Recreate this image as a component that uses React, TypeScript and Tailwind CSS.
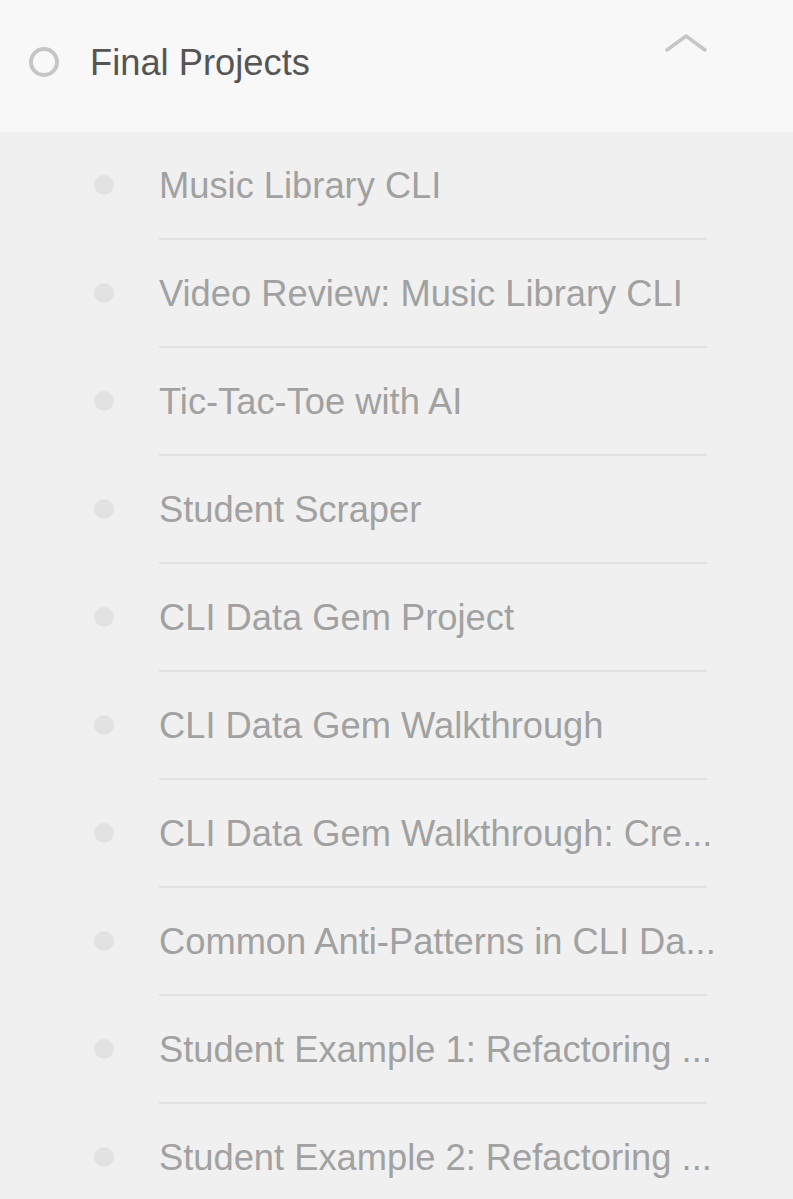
import React from "react";

const items = [
  "Music Library CLI",
  "Video Review: Music Library CLI",
  "Tic-Tac-Toe with AI",
  "Student Scraper",
  "CLI Data Gem Project",
  "CLI Data Gem Walkthrough",
  "CLI Data Gem Walkthrough: Cre...",
  "Common Anti-Patterns in CLI Da...",
  "Student Example 1: Refactoring ...",
  "Student Example 2: Refactoring ...",
];

export default function App() {
  return (
    <div
      className="w-[793px] h-[1199px] overflow-hidden bg-[#f0f0f0]"
      style={{ fontFamily: '"Liberation Sans", Arial, sans-serif' }}
    >
      <div className="h-[132px] bg-[#f8f8f8] flex items-start pl-[29px] pr-[86px]">
        <div className="flex items-center h-[124px] flex-1">
          <div className="w-[30px] h-[30px] rounded-full border-[4px] border-[#c6c6c6]" />
          <div className="ml-[31px] text-[36.3px] text-[#555555] leading-none pt-[2px]">Final Projects</div>
        </div>
        <svg width="42" height="20" viewBox="0 0 42 20" className="mt-[33px]">
          <polyline
            points="2,17 21,3 40,17"
            fill="none"
            stroke="#c6c6c6"
            strokeWidth="3.5"
            strokeLinecap="round"
            strokeLinejoin="round"
          />
        </svg>
      </div>
      <div className="flex flex-col">
        {items.map((t) => (
          <div key={t} className="flex items-center pl-[94px] pr-[86px]">
            <div className="w-[20px] h-[20px] rounded-full bg-[#e2e2e2] shrink-0 mb-[2px]" />
            <div className="ml-[45px] flex-1 min-w-0 h-[108px] border-b-2 border-[#e2e2e2] flex items-center pt-[2px]">
              <div className="whitespace-nowrap text-[36.3px] text-[#a1a1a1] leading-normal">{t}</div>
            </div>
          </div>
        ))}
      </div>
    </div>
  );
}
